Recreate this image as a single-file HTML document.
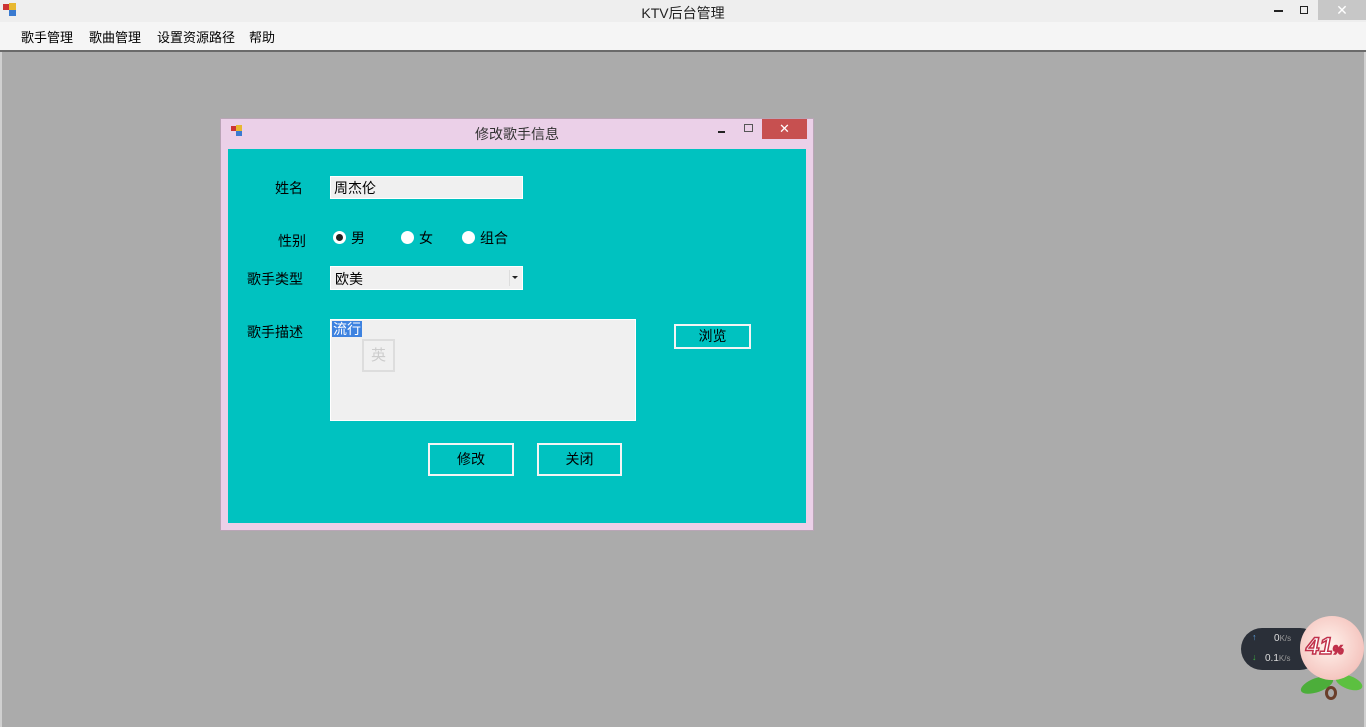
<!DOCTYPE html>
<html><head><meta charset="utf-8"><style>
*{margin:0;padding:0;box-sizing:border-box}
body{width:1366px;height:727px;overflow:hidden;background:#ababab;font-family:"Liberation Sans","Noto Sans CJK SC",sans-serif;font-size:14px;color:#000;position:relative}
.a{position:absolute}
</style></head><body>
<div class="a" style="left:0;top:0;width:1366px;height:22px;background:#eeeeee"></div>
<div class="a" style="left:3px;top:4px;width:6px;height:6px;background:#c33;"></div>
<div class="a" style="left:9px;top:3px;width:7px;height:7px;background:#e8b830"></div>
<div class="a" style="left:9px;top:10px;width:7px;height:6px;background:#3a7ad0"></div>
<div class="a" style="left:0;top:3px;width:1366px;text-align:center;font-size:14px;color:#222">KTV后台管理</div>
<div class="a" style="left:1274px;top:10px;width:9px;height:2px;background:#222"></div>
<div class="a" style="left:1300px;top:6px;width:8px;height:8px;border:1.5px solid #222"></div>
<div class="a" style="left:1318px;top:0;width:48px;height:20px;background:#c7c7c7;color:#fff;text-align:center;font-size:14px;line-height:20px">✕</div>
<div class="a" style="left:0;top:22px;width:1366px;height:28px;background:#f5f5f5"></div>
<div class="a" style="left:21px;top:27px;font-size:13px">歌手管理</div>
<div class="a" style="left:89px;top:27px;font-size:13px">歌曲管理</div>
<div class="a" style="left:157px;top:27px;font-size:13px">设置资源路径</div>
<div class="a" style="left:249px;top:27px;font-size:13px">帮助</div>
<div class="a" style="left:0;top:50px;width:1366px;height:2px;background:#6a6a6a"></div>
<div class="a" style="left:0;top:52px;width:2px;height:675px;background:#d0d0d0"></div>
<div class="a" style="left:1364px;top:52px;width:2px;height:675px;background:#d0d0d0"></div>

<div class="a" style="left:220px;top:118px;width:594px;height:413px;background:#ebd0e8;border:1px solid #b9a5b6"></div>
<div class="a" style="left:231px;top:126px;width:5px;height:5px;background:#c33"></div>
<div class="a" style="left:236px;top:125px;width:6px;height:6px;background:#e8b830"></div>
<div class="a" style="left:236px;top:131px;width:6px;height:5px;background:#3a7ad0"></div>
<div class="a" style="left:220px;top:124px;width:594px;text-align:center;font-size:14px;color:#333">修改歌手信息</div>
<div class="a" style="left:718px;top:131px;width:7px;height:2px;background:#222"></div>
<div class="a" style="left:744px;top:124px;width:9px;height:8px;border:1px solid #555"></div>
<div class="a" style="left:762px;top:119px;width:45px;height:20px;background:#c75050;color:#fff;text-align:center;line-height:20px;font-size:13px">✕</div>
<div class="a" style="left:228px;top:149px;width:578px;height:374px;background:#00c2c0"></div>

<div class="a" style="left:275px;top:178px">姓名</div>
<div class="a" style="left:330px;top:176px;width:193px;height:23px;background:#f0f0f0;border:1px solid #fff;padding:1px 3px">周杰伦</div>
<div class="a" style="left:278px;top:231px">性别</div>
<div class="a" style="left:333px;top:231px;width:13px;height:13px;border-radius:50%;background:#fff"><div style="margin:3px;width:7px;height:7px;border-radius:50%;background:#222"></div></div>
<div class="a" style="left:351px;top:228px">男</div>
<div class="a" style="left:401px;top:231px;width:13px;height:13px;border-radius:50%;background:#fff"></div>
<div class="a" style="left:419px;top:228px">女</div>
<div class="a" style="left:462px;top:231px;width:13px;height:13px;border-radius:50%;background:#fff"></div>
<div class="a" style="left:480px;top:228px">组合</div>
<div class="a" style="left:247px;top:269px">歌手类型</div>
<div class="a" style="left:330px;top:266px;width:193px;height:24px;background:#f0f0f0;border:1px solid #fff;padding:2px 4px">欧美</div>
<div class="a" style="left:509px;top:270px;width:1px;height:16px;background:#ddd"></div>
<div class="a" style="left:512px;top:276px;width:0;height:0;border-left:3px solid transparent;border-right:3px solid transparent;border-top:3px solid #222"></div>
<div class="a" style="left:247px;top:322px">歌手描述</div>
<div class="a" style="left:330px;top:319px;width:306px;height:102px;background:#f0f0f0;border:1px solid #fff"></div>
<div class="a" style="left:332px;top:321px;background:#3d82e0;color:#fff;line-height:16px;padding:0 1px">流行</div>
<div class="a" style="left:362px;top:339px;width:33px;height:33px;border:2px solid #ddd;color:#ccc;text-align:center;line-height:29px;font-size:15px">英</div>
<div class="a" style="left:674px;top:324px;width:77px;height:25px;border:2px solid #f4f4f4;text-align:center;line-height:21px">浏览</div>
<div class="a" style="left:428px;top:443px;width:86px;height:33px;border:2px solid #f4f4f4;text-align:center;line-height:29px">修改</div>
<div class="a" style="left:537px;top:443px;width:85px;height:33px;border:2px solid #f4f4f4;text-align:center;line-height:29px">关闭</div>

<div class="a" style="left:1241px;top:628px;width:80px;height:42px;border-radius:21px;background:#2a2f38"></div>
<div class="a" style="left:1252px;top:632px;color:#5aa0e0;font-size:9px">↑</div>
<div class="a" style="left:1252px;top:652px;color:#3cb040;font-size:9px">↓</div>
<div class="a" style="left:1274px;top:633px;color:#ddd;font-size:10px">0<span style="font-size:8px;color:#999">K/s</span></div>
<div class="a" style="left:1265px;top:653px;color:#ddd;font-size:10px">0.1<span style="font-size:8px;color:#999">K/s</span></div>
<div class="a" style="left:1300px;top:678px;width:34px;height:14px;border-radius:50%;background:#4cae3a;transform:rotate(-20deg)"></div>
<div class="a" style="left:1335px;top:676px;width:28px;height:13px;border-radius:50%;background:#5cc040;transform:rotate(20deg)"></div>
<div class="a" style="left:1325px;top:686px;width:12px;height:14px;border:3px solid #6a3e2a;border-radius:50%"></div>
<div class="a" style="left:1300px;top:616px;width:64px;height:64px;border-radius:50%;background:radial-gradient(circle at 45% 45%,#fff2ec,#f5c6c0 70%,#e8a0a0);"></div>
<div class="a" style="left:1306px;top:633px;font-size:24px;font-style:italic;font-weight:bold;color:#fff;-webkit-text-stroke:1.5px #c0304a">41<span style="font-size:12px">%</span></div>
</body></html>
